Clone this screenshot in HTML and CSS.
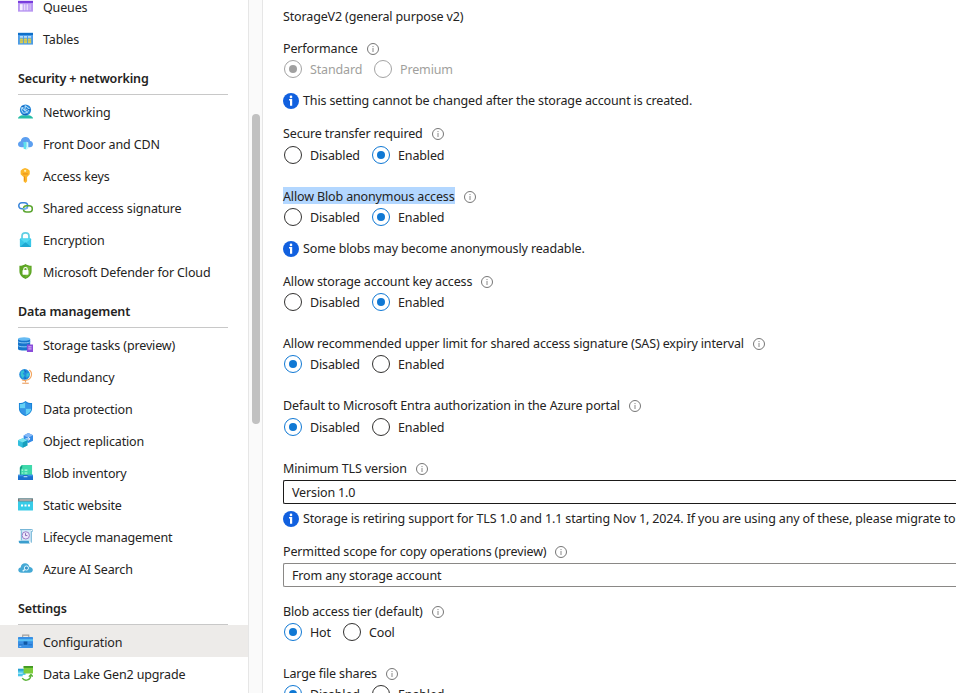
FILE: index.html
```
<!DOCTYPE html>
<html lang="en">
<head>
<meta charset="utf-8">
<title>Storage account configuration</title>
<link rel="stylesheet" href="styles.css">
</head>
<body>
<svg class="defs" aria-hidden="true">
  <symbol id="tip" viewBox="0 0 12 12"><circle cx="6" cy="6" r="5.5" fill="none" stroke="#666" stroke-width=".9"/><path d="M6 5v4M6 3v1.1" stroke="#888" stroke-width="1"/></symbol>
  <symbol id="info" viewBox="0 0 16 16"><circle cx="8" cy="8" r="8" fill="#1160df"/><circle cx="8" cy="3.9" r="1.3" fill="#fff"/><path d="M6 6.100h3.200v6.600H7V7.400H6z" fill="#fff"/></symbol>
</svg>
<div class="app">
  <nav class="sidebar">
    <a class="item"><svg viewBox="0 0 16 16"><path fill="#b795f2" d="M0 2h16v11.500H0z"/><path fill="#773adc" d="M0 2h16v2.200H0z"/><path fill="#f6f0ff" d="M2 5.500h3V12H2z"/><path fill="#e7dafb" d="M6 5.500h2V12H6zM9 5.500h2V12H9z"/><path fill="#cdb5f6" d="M12 5.500h2V12h-2z"/></svg><span>Queues</span></a>
    <a class="item"><svg viewBox="0 0 16 16"><path fill="#4c9ce8" d="M0 2h16v12.500H0z"/><path fill="#0f70c9" d="M0 2h16v2.300H0z"/><path fill="#b5dcfa" d="M2 5.300h3.300v2H2zM6.300 5.300h3.300v2H6.300zM10.600 5.300h3.400v2h-3.400z"/><path fill="#d8cd51" d="M2 8h3.300v5H2zM6.300 8h3.300v5H6.300zM10.600 8h3.400v5h-3.400z"/><path stroke="#8fac80" stroke-width=".5" d="M2 10.500h12"/></svg><span>Tables</span></a>
    <h2>Security + networking</h2>
    <a class="item"><svg viewBox="0 0 16 16"><path fill="#26bda5" d="M0 15.500c0-2 3-3.500 5-3.500h6c2 0 5 1.500 5 3.500z"/><circle cx="8" cy="6.500" r="6" fill="#2789dc"/><path fill="none" stroke="#bfe5fc" d="M4 4l4-2 4 3-2 4-4 1-2-3zM4 4l6 5M8 2l-1 5M12 5l-5 2"/><path stroke="#0e5cb3" d="M4 2.500h3M10 6h3M5 11h5"/></svg><span>Networking</span></a>
    <a class="item"><svg viewBox="0 0 16 16"><path fill="#5c9ff0" d="M4 12C1.500 12 0 10.500 0 8.700s1.500-3 3-3.200C3.400 2.500 5.500 1 8 1c2.600 0 4.500 1.600 5 4.400 1.700.2 3 1.500 3 3.300S14.500 12 12.600 12z"/><path fill="#5de1ed" d="M5 7l4-1v8.500l-3-1V8z"/><path fill="#c8f9fb" d="M9 6l2 1v6.500l-2 1z"/></svg><span>Front Door and CDN</span></a>
    <a class="item"><svg viewBox="0 0 16 16"><path fill="#fcb72b" d="M7.500 0 10.500 1l2 2v3.700l-2 2-.8 1V14L8 16l-2-1.500V9.700l-1-1-2.200-2V3l2-2z"/><circle cx="7.600" cy="3" r="1.200" fill="#fff1b5"/><path stroke="#e68a16" d="M5 6.300h5.500M7 9v4.500"/></svg><span>Access keys</span></a>
    <a class="item"><svg viewBox="0 0 16 16" fill="none" stroke-width="1.600"><rect x=".8" y="2.800" width="9.500" height="6.600" rx="3.300" stroke="#3b86da"/><rect x="5.800" y="6.200" width="9.500" height="6.600" rx="3.300" stroke="#5aa52f"/><path d="M5 9.400h2.500a3 3 0 0 0 2.500-2" stroke="#72b8ef"/></svg><span>Shared access signature</span></a>
    <a class="item"><svg viewBox="0 0 16 16"><path fill="none" stroke="#62cfe4" stroke-width="1.900" d="M4.300 8V4.500c0-4.700 7.400-4.700 7.400 0V8"/><rect x="2" y="7" width="12" height="9" rx=".7" fill="#38c7e8"/><path fill="#54daf2" d="M2 7h12l-6 5z"/><path fill="#1fa8d1" d="M2 16l6-5 6 5z"/></svg><span>Encryption</span></a>
    <a class="item"><svg viewBox="0 0 16 16"><path fill="#5da524" d="M8 0c1.500 1.300 3.800 1.800 6.500 1.900v5.600c0 4.200-2.700 6.900-6.500 8.500-3.800-1.600-6.500-4.300-6.500-8.500V1.900C4.200 1.800 6.500 1.300 8 0z"/><path fill="#74b93a" d="M8 1.500c1.300.9 3 1.500 5.200 1.600v4.400c0 3.200-2 5.400-5.200 6.800z"/><rect x="4.800" y="6.500" width="6.400" height="4.900" rx=".7" fill="#fff"/><path d="M6.200 7V5.200c0-2 3.600-2 3.600 0V7" fill="none" stroke="#fff" stroke-width="1.200"/></svg><span>Microsoft Defender for Cloud</span></a>
    <h2>Data management</h2>
    <a class="item"><svg viewBox="0 0 16 16"><path fill="#1775cc" d="M0 2.200h13v10.500c0 2.200-13 2.200-13 0z"/><ellipse cx="6.500" cy="2.200" rx="6.500" ry="1.900" fill="#67bbf3"/><path d="M0 4.800c0 2 13 2 13 0M0 9c0 2 13 2 13 0" fill="none" stroke="#92cff7"/><path fill="#8a4cda" d="M9.500 8H16v8H9.500z"/><path d="M11 10.500h3.500M11 12.700h3.500" stroke="#e3cafd"/></svg><span>Storage tasks (preview)</span></a>
    <a class="item"><svg viewBox="0 0 16 16"><path d="M12 1c4 3 3 10-3.500 11-2 .3-3.500 0-4.500-.7M8 12v2.500" fill="none" stroke="#f3a45d" stroke-width="1.200"/><path d="M4.500 15.200h7" stroke="#eaa065" stroke-width="1.200"/><circle cx="7" cy="5.800" r="5.700" fill="#228ddd"/><path fill="#35c3d4" d="M3 3l3-2 1 2-2 2 2 2-2 3-2-3zM9 5l3-1v3L9 9z"/><path fill="#1668c0" d="M6 1l3 1-1 2zM7 8l2 2-2 1z"/></svg><span>Redundancy</span></a>
    <a class="item"><svg viewBox="0 0 16 16"><path fill="#1683d8" d="M8 0c2 1.700 4.300 2.200 7 2.200v5.500c0 4.200-3 6.700-7 8.300-4-1.600-7-4.100-7-8.300V2.200C3.700 2.200 6 1.700 8 0z"/><path fill="#63d0f5" d="M8 1.200V8h6c0 3.600-2.500 5.500-6 7V8H2V3.200c2.200 0 4.200-.6 6-2z"/><path fill="#3494e6" d="M8 1.200c1.800 1.400 3.800 2 6 2V8H8zM2 8h6v7c-3.500-1.500-6-3.400-6-7z"/></svg><span>Data protection</span></a>
    <a class="item"><svg viewBox="0 0 16 16"><path fill="#348be6" d="M6 2.700L11 0l5 2.500v5.700L11 10.700 6 8z"/><path fill="#86b9f7" d="M6 2.700L11 0l5 2.500L11 5z"/><path d="M8 6.300h4.500M10.800 4.500l1.700 1.800-1.700 1.800" fill="none" stroke="#fff"/><path fill="#32bedd" d="M0 7.800l5-2.200 5 2.200v5.400L5 15.800 0 13.200z"/><path fill="#78e4ee" d="M0 7.800l5-2.200 5 2.200-5 2.300z"/><path fill="#179fbd" d="M5 10.100l5-2.300v5.400l-5 2.600z"/></svg><span>Object replication</span></a>
    <a class="item"><svg viewBox="0 0 16 16"><path fill="#3fd9ab" d="M2 11V2L4 0h11v11z"/><path fill="#159b84" d="M2 3L4.500 0v3L3 5v6H2z"/><path d="M4 5.500h1.500M7 5.500h3M4 8.500h1.500M7 8.500h3" stroke="#b7fee0" stroke-width="1.200"/><path fill="#1b70cf" d="M0 10.500h16V16H0z"/><path fill="#3c94e6" d="M0 10.500h5l1 1.500h4l1-1.500h5v1.500H0z"/><path d="M6 12.500h4" stroke="#d8efff"/></svg><span>Blob inventory</span></a>
    <a class="item"><svg viewBox="0 0 16 16"><rect y="1.500" width="16" height="13" rx=".6" fill="#38cce8"/><path fill="#777" d="M0 1.500h16v3.200H0z"/><path d="M1.500 3.200h13" stroke="#e0e0e0"/><path d="M3.200 9h2.200M6.900 9h2.200M10.600 9h2.200" stroke="#fff" stroke-width="2"/></svg><span>Static website</span></a>
    <a class="item"><svg viewBox="0 0 16 16"><path fill="#d1e9f8" d="M3.500 1h10.500v12.500H3.500z"/><path fill="#3b9ece" d="M.8 12.500h10.700c0 1.500.7 2.600 1.500 3H2.500C1.300 15.500.6 14 .8 12.500z"/><path fill="none" stroke="#64add2" d="M3.500 12V2.500C3.500 1 3 .8 2.300.6h12.400c1.500 0 1.300 2 .5 2h-1v12"/><circle cx="8.300" cy="6.800" r="3.900" fill="#eee8fb" stroke="#9a78c4"/><path d="M8 4.500V7h2" fill="none" stroke="#7e64b4"/></svg><span>Lifecycle management</span></a>
    <a class="item"><svg viewBox="0 0 16 16"><path fill="#45a9d5" d="M4 12.500C1.500 12.500.3 11.200.3 9.600c0-1.500 1-2.600 2.500-2.800C3.200 4 5.200 2.500 7.500 2.500c2.500 0 4.300 1.500 4.800 4 2 .1 3.500 1.400 3.500 3.100 0 1.600-1.400 2.900-3.300 2.900z"/><circle cx="9" cy="7.500" r="2.200" fill="#3a95cb" stroke="#e6faff"/><path d="M7.300 9L5 11" stroke="#e6faff" stroke-width="1.500"/></svg><span>Azure AI Search</span></a>
    <h2>Settings</h2>
    <a class="item active"><svg viewBox="0 0 16 16"><path fill="none" stroke="#9d9d9d" stroke-width="1.100" d="M5 4v-2.800h6.500V4"/><rect y="3.300" width="16" height="11.500" rx=".6" fill="#398fe4"/><path fill="#58c0f5" d="M0 5.500h16v2.200H0z"/><path fill="#0f58a5" d="M6 8h4v3.500H6z"/><path stroke="#216fc5" d="M1 11.500h4M11 11.500h4"/><path stroke="#a3cffa" d="M1.500 13.200h2"/></svg><span>Configuration</span></a>
    <a class="item"><svg viewBox="0 0 16 16"><path fill="#4bc5e8" d="M0 3h8v8H0z"/><path fill="#2b9fd0" d="M0 3h6v2H0z"/><path fill="#a0e8f5" d="M0 7h5v1.500H0z"/><path fill="#7ccc3a" d="M6 0h10v8H6z"/><path fill="#429822" d="M6 0h10v2H6z"/><path fill="#fff" d="M5 9.500h11V16H5z"/><path fill="none" stroke="#5ab336" stroke-width="1.400" d="M4.500 13c3 4 9 2 9.300-3M11.500 11.300l2.300-2.300 2 2.300"/></svg><span>Data Lake Gen2 upgrade</span></a>
  </nav>
  <div class="track"><div class="thumb"></div></div>
  <main class="content">
    <div class="line kind"><span>Account kind</span></div>
    <div class="line g16"><span>StorageV2 (general purpose v2)</span></div>
    <div class="line g12"><span>Performance</span><svg class="tip"><use href="#tip"/></svg></div>
    <div class="line g1 radios disabled"><label class="std"><i class="on"></i>Standard</label><label><i></i>Premium</label></div>
    <div class="line g12 note"><svg><use href="#info"/></svg><span>This setting cannot be changed after the storage account is created.</span></div>
    <div class="line g12"><span>Secure transfer required</span><svg class="tip"><use href="#tip"/></svg></div>
    <div class="line g2 radios"><label><i></i>Disabled</label><label><i class="on"></i>Enabled</label></div>
    <div class="line g21"><span class="selected">Allow Blob anonymous access</span><svg class="tip"><use href="#tip"/></svg></div>
    <div class="line g1 radios"><label><i></i>Disabled</label><label><i class="on"></i>Enabled</label></div>
    <div class="line g12 note"><svg><use href="#info"/></svg><span>Some blobs may become anonymously readable.</span></div>
    <div class="line g12"><span>Allow storage account key access</span><svg class="tip"><use href="#tip"/></svg></div>
    <div class="line g1 radios"><label><i></i>Disabled</label><label><i class="on"></i>Enabled</label></div>
    <div class="line g21"><span>Allow recommended upper limit for shared access signature (SAS) expiry interval</span><svg class="tip"><use href="#tip"/></svg></div>
    <div class="line g1 radios"><label><i class="on"></i>Disabled</label><label><i></i>Enabled</label></div>
    <div class="line g21"><span>Default to Microsoft Entra authorization in the Azure portal</span><svg class="tip"><use href="#tip"/></svg></div>
    <div class="line g2 radios"><label><i class="on"></i>Disabled</label><label><i></i>Enabled</label></div>
    <div class="line g21"><span>Minimum TLS version</span><svg class="tip"><use href="#tip"/></svg></div>
    <div class="select focus">Version 1.0</div>
    <div class="line g5 note"><svg><use href="#info"/></svg><span>Storage is retiring support for TLS 1.0 and 1.1 starting Nov 1, 2024. If you are using any of these, please migrate to</span></div>
    <div class="line g12"><span>Permitted scope for copy operations (preview)</span><svg class="tip"><use href="#tip"/></svg></div>
    <div class="select">From any storage account</div>
    <div class="line g14"><span>Blob access tier (default)</span><svg class="tip"><use href="#tip"/></svg></div>
    <div class="line g1 radios"><label class="hot"><i class="on"></i>Hot</label><label><i></i>Cool</label></div>
    <div class="line g21"><span>Large file shares</span><svg class="tip"><use href="#tip"/></svg></div>
    <div class="line g1 radios"><label><i class="on"></i>Disabled</label><label><i></i>Enabled</label></div>
  </main>
</div>
</body>
</html>
```
FILE: styles.css
```
* { box-sizing: border-box; }
body {
  margin: 0;
  height: 693px;
  overflow: hidden;
  background: #fff;
  color: #242322;
  font: 12.5px/20px "Noto Sans", "Open Sans", sans-serif;
  letter-spacing: -0.14px;
}
.defs { display: none; }
.app { display: flex; height: 693px; overflow: hidden; }

.sidebar { flex: none; width: 248px; height: 693px; overflow: hidden; }
.sidebar .item:first-child { margin-top: -10px; }
.item {
  display: flex;
  align-items: center;
  height: 32px;
  padding: 4px 0 0 18px;
  gap: 10px;
}
.item svg { flex: none; width: 15px; height: 15px; margin-top: -4px; }
.item.active { background: #edebe9; }
.sidebar h2 {
  height: 41px;
  margin: 0 20px 0 18px;
  padding-top: 15px;
  border-bottom: 1px solid #c8c8c8;
  font-size: 12.5px;
  font-weight: 600;
  line-height: 20px;
}

.track {
  flex: none;
  width: 15px;
  padding: 114px 0 0 3px;
  background: #fafafa;
  border: solid #e6e6e6;
  border-width: 0 1px;
}
.thumb { width: 8px; height: 310px; border-radius: 4px; background: #c1c1c1; }

.content { flex: 1; min-width: 0; padding-left: 20px; overflow: hidden; }
.line { display: flex; align-items: center; height: 20px; white-space: nowrap; }
.line span { padding-top: 2px; }
.kind { margin-top: -30px; }
.g1 { margin-top: 1px; }
.g2 { margin-top: 2px; }
.g5 { margin-top: 5px; }
.g12 { margin-top: 12px; }
.g14 { margin-top: 14px; }
.g16 { margin-top: 16px; }
.g21 { margin-top: 21px; }
.tip { width: 12px; height: 12px; margin: 1px 0 0 9px; }
.line .selected { height: 17px; margin-top: -1px; padding-top: 0; line-height: 20px; background: #b3d7ff; }

.radios { padding-left: 1px; }
.radios label { display: flex; align-items: center; width: 88px; padding-top: 2px; gap: 8px; }
.radios .std { width: 90px; }
.radios .hot { width: 59px; }
.radios i {
  display: flex;
  flex: none;
  align-items: center;
  justify-content: center;
  width: 18px;
  height: 18px;
  margin-top: -2px;
  border: 1px solid #323130;
  border-radius: 50%;
}
.radios i.on { border-color: #0f78d4; }
.radios i.on::after {
  content: "";
  width: 8px;
  height: 8px;
  border-radius: 50%;
  background: #0f78d4;
}
.disabled { color: #a19f9d; }
.disabled i, .disabled i.on { border-color: #a3a3a3; }
.disabled i.on::after { background: #a0a0a0; }

.note svg { flex: none; width: 16px; height: 16px; margin-right: 4px; }
.note span { margin-top: -1px; padding-top: 0; }
.select {
  height: 24px;
  margin-top: 2px;
  padding-left: 8px;
  border: 1px solid #8a8886;
  border-right: 0;
  border-radius: 2px 0 0 2px;
  line-height: 23px;
}
.select.focus { border-color: #1b1a19; }
```
